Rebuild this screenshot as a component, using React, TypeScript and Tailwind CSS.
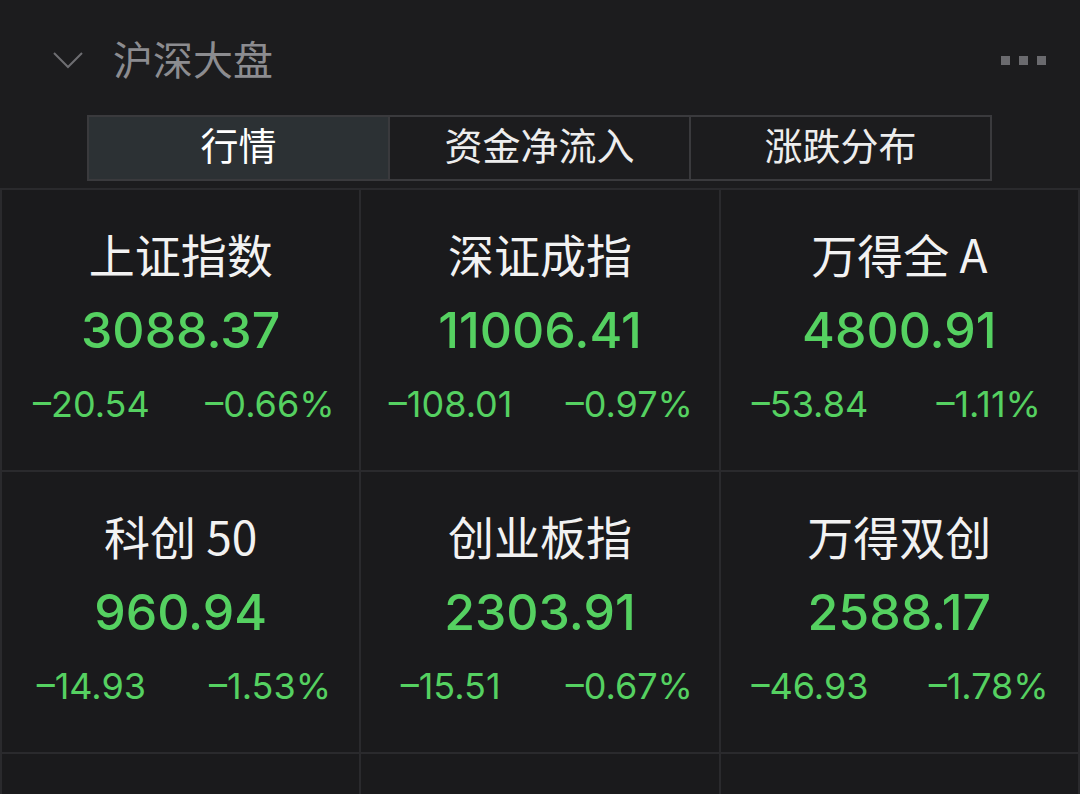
import React from "react";

type Quote = { name: string; price: string; change: string; pct: string };

const quotes: Quote[] = [
  { name: "上证指数", price: "3088.37", change: "–20.54", pct: "–0.66%" },
  { name: "深证成指", price: "11006.41", change: "–108.01", pct: "–0.97%" },
  { name: "万得全 A", price: "4800.91", change: "–53.84", pct: "–1.11%" },
  { name: "科创 50", price: "960.94", change: "–14.93", pct: "–1.53%" },
  { name: "创业板指", price: "2303.91", change: "–15.51", pct: "–0.67%" },
  { name: "万得双创", price: "2588.17", change: "–46.93", pct: "–1.78%" },
];

const tabs = ["行情", "资金净流入", "涨跌分布"];

const cjk = "font-['Noto_Sans_CJK_SC',sans-serif]";
const num = "font-['Inter','Noto_Sans_CJK_SC',sans-serif]";

function QuoteCell({ q }: { q: Quote }) {
  return (
    <div className="h-[282px] border-b-2 border-r-2 border-[#2a2a2d] flex flex-col items-center pt-[36px]">
      <div className={`${cjk} text-[46px] leading-[54px] text-[#f2f2f2]`}>{q.name}</div>
      <div className={`${num} mt-[18px] text-[50px] leading-[64px] font-medium text-[#55d161]`}>
        {q.price}
      </div>
      <div className={`${num} mt-[22px] w-full grid grid-cols-2 text-[36px] leading-[40px] text-[#55d161]`}>
        <span className="text-center">{q.change}</span>
        <span className="text-center">{q.pct}</span>
      </div>
    </div>
  );
}

export default function App() {
  return (
    <div className="w-[1080px] h-[794px] overflow-hidden bg-[#1c1c1e]">
      {/* header */}
      <div className="h-[115px] flex items-start pt-[36px]">
        <svg className="ml-[52px] mt-[14px]" width="32" height="20" viewBox="0 0 32 20" fill="none">
          <path d="M2 3 L16 17 L30 3" stroke="#6e6e72" strokeWidth="2" />
        </svg>
        <div className={`${cjk} ml-[29px] text-[40px] leading-[44px] text-[#8c8c90]`}>沪深大盘</div>
        <div className="ml-auto mr-[34px] mt-[20px] flex gap-[9px]">
          <span className="w-[9px] h-[9px] bg-[#6a6a6e]" />
          <span className="w-[9px] h-[9px] bg-[#6a6a6e]" />
          <span className="w-[9px] h-[9px] bg-[#6a6a6e]" />
        </div>
      </div>

      {/* tabs */}
      <div className="ml-[87px] w-[905px] h-[66px] flex border-2 border-[#3a3a3d]">
        {tabs.map((t, i) => (
          <div
            key={t}
            className={`${cjk} flex-1 flex items-center justify-center pb-[10px] text-[38px] ${
              i === 0 ? "bg-[#2c3134] text-white" : "bg-[#1c1c1e] text-[#ededed]"
            } ${i > 0 ? "border-l-2 border-[#3a3a3d]" : ""}`}
          >
            {t}
          </div>
        ))}
      </div>

      {/* grid */}
      <div className="mt-[7px] border-t-2 border-l-2 border-[#2a2a2d] grid grid-cols-3 bg-[#1a1a1c]">
        {quotes.map((q) => (
          <QuoteCell key={q.name} q={q} />
        ))}
        <div className="h-[60px] border-r-2 border-[#2a2a2d]" />
        <div className="h-[60px] border-r-2 border-[#2a2a2d]" />
        <div className="h-[60px] border-r-2 border-[#2a2a2d]" />
      </div>
    </div>
  );
}
